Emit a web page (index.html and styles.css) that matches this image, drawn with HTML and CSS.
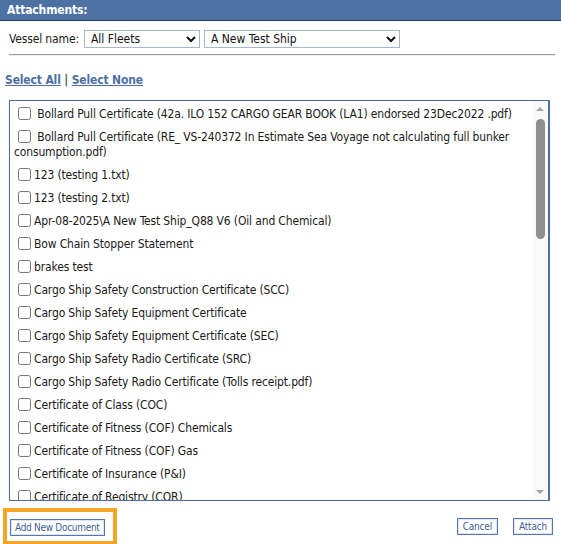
FILE: index.html
```html
<!DOCTYPE html>
<html lang="en">
<head>
    <meta charset="UTF-8">
    <title>Attachments</title>
    <link rel="stylesheet" href="styles.css">
</head>
<body>
    <div class="panel-title">Attachments:</div>

    <div class="vessel-row">
        <label for="fleet">Vessel name:</label>
        <select id="fleet" class="sel sel-fleet">
            <option>All Fleets</option>
        </select>
        <select id="ship" class="sel sel-ship">
            <option>A New Test Ship</option>
        </select>
    </div>
    <div class="divider"></div>

    <div class="select-links">
        <a href="#">Select All</a> | <a href="#">Select None</a>
    </div>

    <div class="doc-box">
        <div class="doc-list">
            <div class="doc-item"><input type="checkbox"> Bollard Pull Certificate (42a. ILO 152 CARGO GEAR BOOK (LA1) endorsed 23Dec2022 .pdf)</div>
            <div class="doc-item"><input type="checkbox"> Bollard Pull Certificate (RE_ VS-240372 In Estimate Sea Voyage not calculating full bunker consumption.pdf)</div>
            <div class="doc-item"><input type="checkbox">123 (testing 1.txt)</div>
            <div class="doc-item"><input type="checkbox">123 (testing 2.txt)</div>
            <div class="doc-item"><input type="checkbox">Apr-08-2025\A New Test Ship_Q88 V6 (Oil and Chemical)</div>
            <div class="doc-item"><input type="checkbox">Bow Chain Stopper Statement</div>
            <div class="doc-item"><input type="checkbox">brakes test</div>
            <div class="doc-item"><input type="checkbox">Cargo Ship Safety Construction Certificate (SCC)</div>
            <div class="doc-item"><input type="checkbox">Cargo Ship Safety Equipment Certificate</div>
            <div class="doc-item"><input type="checkbox">Cargo Ship Safety Equipment Certificate (SEC)</div>
            <div class="doc-item"><input type="checkbox">Cargo Ship Safety Radio Certificate (SRC)</div>
            <div class="doc-item"><input type="checkbox">Cargo Ship Safety Radio Certificate (Tolls receipt.pdf)</div>
            <div class="doc-item"><input type="checkbox">Certificate of Class (COC)</div>
            <div class="doc-item"><input type="checkbox">Certificate of Fitness (COF) Chemicals</div>
            <div class="doc-item"><input type="checkbox">Certificate of Fitness (COF) Gas</div>
            <div class="doc-item"><input type="checkbox">Certificate of Insurance (P&amp;I)</div>
            <div class="doc-item"><input type="checkbox">Certificate of Registry (COR)</div>
            <div class="doc-item"><input type="checkbox">Crew List</div>
            <div class="doc-item"><input type="checkbox">Deratting Exemption Certificate</div>
        </div>
        <div class="scrollbar">
            <div class="sb-arrow sb-up"></div>
            <div class="sb-track"><div class="sb-thumb"></div></div>
            <div class="sb-arrow sb-down"></div>
        </div>
    </div>

    <div class="footer">
        <div class="highlight">
            <button class="btn btn-add">Add New Document</button>
        </div>
        <div class="footer-right">
            <button class="btn">Cancel</button>
            <button class="btn">Attach</button>
        </div>
    </div>
</body>
</html>
```

FILE: styles.css
```css
body {
    margin: 0;
    padding: 0;
    background-color: #fff;
    color: #1a1a1a;
    font-family: 'DejaVu Sans Condensed', 'DejaVu Sans', sans-serif;
    font-size: 12px;
    letter-spacing: -0.15px;
}

.panel-title {
    background-color: #4e71a4;
    border-bottom: 1px solid #21406e;
    color: #fff;
    font-weight: bold;
    font-size: 12px;
    height: 20px;
    line-height: 20px;
    padding-left: 7px;
}

.vessel-row {
    display: flex;
    align-items: center;
    gap: 4px;
    padding: 9px 0 0 9px;
}

.vessel-row label {
    margin-right: 1px;
}

.sel {
    height: 18px;
    font-family: inherit;
    font-size: 12px;
    color: #111;
    border: 1px solid #a8b8cb;
    border-radius: 0;
    background-color: #fff;
    padding: 0 2px;
}

.sel-fleet {
    width: 116px;
}

.sel-ship {
    width: 196px;
}

.divider {
    margin: 6px 6px 0 9px;
    border-top: 1px solid #9a9a9a;
    border-bottom: 1px solid #eeeeee;
}

.select-links {
    padding: 17px 0 0 5px;
    line-height: 15px;
    font-weight: bold;
    color: #555;
}

.select-links a {
    color: #4e6fa2;
    text-decoration: underline;
}

.doc-box {
    display: flex;
    margin: 12px 11px 0 9px;
    height: 399px;
    border: 1px solid #4e6fa5;
    border-right-width: 2px;
    overflow: hidden;
}

.doc-list {
    flex: 1;
    padding: 6px 0 0 4px;
    overflow: hidden;
}

.doc-item {
    line-height: 15px;
    margin-bottom: 8px;
}

.doc-item input {
    width: 13px;
    height: 13px;
    margin: 0 3px 0 4px;
    vertical-align: -2px;
}

.scrollbar {
    width: 15px;
    display: flex;
    flex-direction: column;
    background-color: #f9f9f9;
}

.sb-arrow {
    height: 15px;
    position: relative;
}

.sb-up::after,
.sb-down::after {
    content: '';
    position: absolute;
    left: 3px;
    border-left: 4px solid transparent;
    border-right: 4px solid transparent;
}

.sb-up::after {
    top: 6px;
    border-bottom: 4px solid #a3a3a3;
}

.sb-down::after {
    top: 5px;
    border-top: 4px solid #a3a3a3;
}

.sb-track {
    flex: 1;
    padding: 3px 3px 0 3px;
}

.sb-thumb {
    height: 120px;
    background-color: #8f8f8f;
    border-radius: 5px;
}

.footer {
    display: flex;
    justify-content: space-between;
    align-items: center;
    padding: 7px 8px 0 3px;
}

.highlight {
    border: 4px solid #f5a623;
    padding: 7px 8px 5px 3px;
    line-height: 0;
}

.footer-right {
    display: flex;
    gap: 15px;
}

.btn {
    font-family: inherit;
    font-size: 10px;
    letter-spacing: -0.2px;
    color: #3f5f95;
    background-color: #fff;
    border: 1px solid #5277b3;
    box-shadow: inset 0 0 0 1px #dfe6f1;
    height: 17px;
    padding: 0 5px;
    line-height: 15px;
    cursor: pointer;
}

.btn-add {
    padding: 0 4px;
    letter-spacing: -0.3px;
}
```
